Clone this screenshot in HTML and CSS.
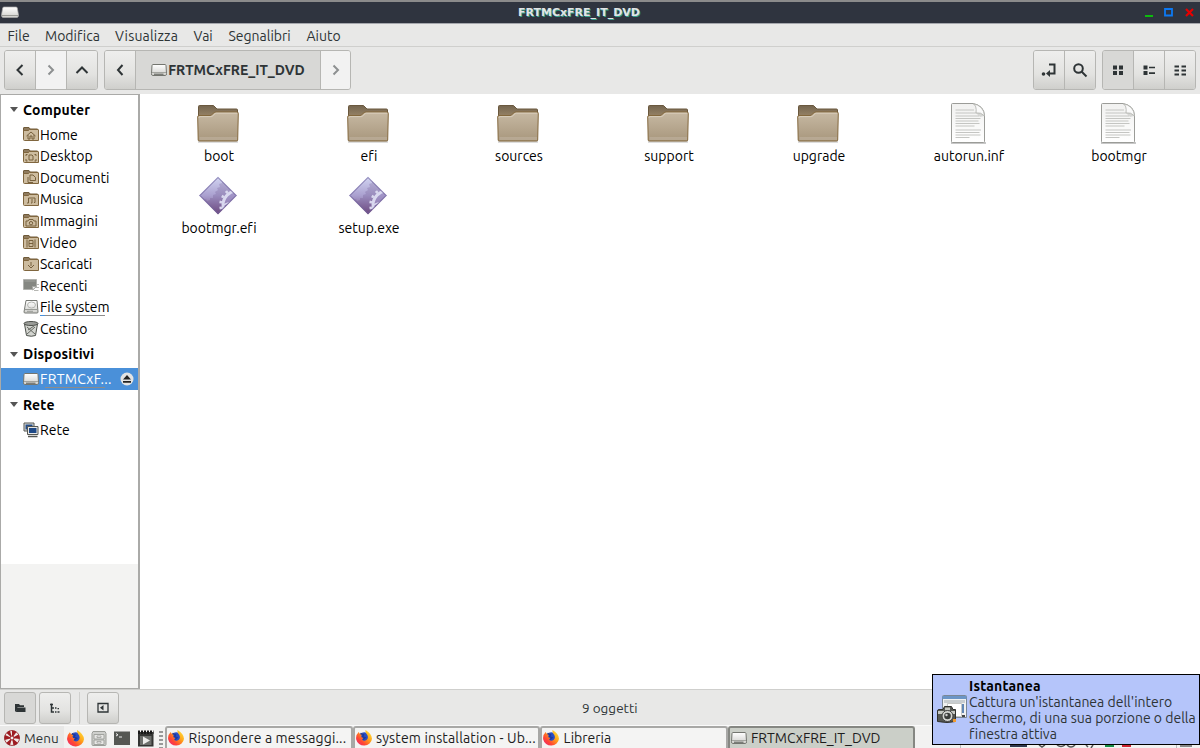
FILE: index.html
```html
<!DOCTYPE html>
<html lang="it">
<head>
  <meta charset="UTF-8">
  <title>FRTMCxFRE_IT_DVD</title>
  <link rel="stylesheet" href="styles.css">
</head>
<body>
  <!-- Icone condivise -->
  <svg class="defs" width="0" height="0">
    <defs>
      <linearGradient id="gFolder" x1="0" y1="0" x2="0" y2="1"><stop offset="0" stop-color="#c7b9a3"/><stop offset="1" stop-color="#a8977d"/></linearGradient>
      <linearGradient id="gBack" x1="0" y1="0" x2="0" y2="1"><stop offset="0" stop-color="#74654f"/><stop offset="1" stop-color="#968265"/></linearGradient>
      <linearGradient id="gExe" x1="0" y1="0" x2="0" y2="1"><stop offset="0" stop-color="#d3d6f3"/><stop offset=".5" stop-color="#aaa0cf"/><stop offset="1" stop-color="#70497f"/></linearGradient>
      <linearGradient id="gPage" x1="0" y1="0" x2="0" y2="1"><stop offset="0" stop-color="#f1f1f0"/><stop offset="1" stop-color="#fff"/></linearGradient>
      <linearGradient id="gDisk" x1="0" y1="0" x2="0" y2="1"><stop offset="0" stop-color="#fff"/><stop offset="1" stop-color="#cfcfcb"/></linearGradient>
      <linearGradient id="gFox" x1="1" y1="0" x2="0" y2="1"><stop offset="0" stop-color="#fff044"/><stop offset=".4" stop-color="#ffa319"/><stop offset=".7" stop-color="#ff4634"/><stop offset="1" stop-color="#e8207f"/></linearGradient>
      <clipPath id="cExe"><path d="M24 6L42 24.500 24 43 6 24.500z"/></clipPath>
    </defs>
    <symbol id="folder" viewBox="0 0 48 48">
      <path d="M4 43h40" stroke="#000" stroke-opacity=".18" stroke-width="1.500"/>
      <path d="M4.500 17V7.500q0-1 1-1H19.500l3.500 3.500H42.500q1 0 1 1V17z" fill="url(#gBack)" stroke="#6a583e"/>
      <path d="M3.700 18q0-1.500 1.300-1.500H16q1 0 1.800-.8l2.200-2q.8-.7 2-.7H43q1.300 0 1.300 1.300L43.700 41q0 1-1 1H5.200q-1 0-1-1z" fill="url(#gFolder)" stroke="#84683d"/>
      <path d="M4.900 18.800q0-1.200 1-1.200H17q1 0 1.500-.5l2.500-2.300q.6-.6 1.500-.6H43" fill="none" stroke="#e0d6c6" stroke-opacity=".75"/>
      <path d="M5.500 38h37.500v3H5.500z" fill="#cabfaf" opacity=".4"/>
    </symbol>
    <symbol id="page" viewBox="0 0 48 48">
      <path d="M7 44h35" stroke="#000" stroke-opacity=".22" stroke-width="2"/>
      <path d="M8.500 4.500H29q11 2 11.500 12V42.500q0 1-1 1H8.500q-1 0-1-1V5.500q0-1 1-1z" fill="url(#gPage)" stroke="#9b9c98"/>
      <path d="M11.500 11H30m-18.500 3H32m-20.500 3H35m-23.500 2.500h25m-25 2.500h23m-23 2.500h24m-24 2.500h19M11.500 31H37m-25.500 2.500h24m-24 2.500h25m-25 2.500h14" stroke="#c4c5c2" stroke-width="1"/>
      <path d="M29 4.500q4 2 3 9.500 5-1 8.500 3Q40 7 29 4.500z" fill="#fafafa" stroke="#adaea9" stroke-width=".8"/>
      <path d="M32 14q5-1 8 3l-4 1z" fill="#b8b9b6" opacity=".5"/>
    </symbol>
    <symbol id="exe" viewBox="0 0 48 48">
      <path d="M24 5.500L43 24.500 24 43.500 5 24.500z" fill="url(#gExe)"/>
      <g clip-path="url(#cExe)">
        <path d="M6 27l3 0 1 2 2-1 1 2 3-1 0-2 3 0 0-3 3-1-1-2 3-2-1-2 3-1-1-3 3-1 0-3 5 2 14 14L24 46 6 30z" fill="#5f437f" opacity=".22"/>
        <circle cx="43" cy="34" r="14" fill="#a79bd0" fill-opacity=".5" stroke="#d9d8ef" stroke-width="3"/>
        <circle cx="43" cy="34" r="16.500" fill="none" stroke="#d9d8ef" stroke-width="2.500" stroke-dasharray="2.600 3.300"/>
        <path d="M29 34l8-3" stroke="#d9d8ef" stroke-width="1.500"/>
      </g>
      <path d="M24 6.500L42 24.500 24 42.500 6 24.500z" fill="none" stroke="#71649c" stroke-width=".9"/>
    </symbol>
    <symbol id="sfolder" viewBox="0 0 16 16">
      <path d="M.5 5V2q0-.5.500-.5h5l1 1.500h7.500v2z" fill="#8f7b5e" stroke="#705b3a"/>
      <path d="M.5 5q0-.5.500-.5h4.500l1-1h8.500q.5 0 .5.500v10.500H1.500q-1 0-1-1z" fill="#cdbc9f" stroke="#80663e"/>
    </symbol>
    <symbol id="drive" viewBox="0 0 16 14">
      <path d="M2 1.500h12q.8 0 1 1l.5 8q0 2-1 2H1.500q-1 0-1-2l.5-8q.2-1 1-1z" fill="url(#gDisk)" stroke="#73756f"/>
      <path d="M1 9.500h14" stroke="#a3a49f"/><path d="M3 11.200h9.500" stroke="#555752"/>
    </symbol>
    <symbol id="firefox" viewBox="0 0 16 16">
      <circle cx="8.200" cy="8.200" r="6" fill="#284ec3"/>
      <path d="M9.500 0Q16 4 16 8.700A8 7.500 0 0 1 .2 9.500Q-.5 5 2.700 2l1 1.800 2.800-.6L5 6.500l3 1-2 2.200q2 1.800 4.500.4Q12.800 8 11.300 5 9 3 9.500 0z" fill="url(#gFox)"/>
      <path d="M4.500 3.500l3 1.300-1 2 2.500 1-2 1.700" fill="none" stroke="#1c3aa0" stroke-width="1.500"/>
    </symbol>
  </svg>

  <header class="titlebar">
    <svg class="titlebar-icon" width="18" height="13" viewBox="0 0 18 13"><path d="M3 1h12q1 0 1.300 1L17.500 9q0 2.500-1.500 2.500H2Q.5 11.500.5 9L1.700 2Q2 1 3 1z" fill="url(#gDisk)" stroke="#aaa" stroke-width=".7"/><path d="M1 9.500h16" stroke="#999a96"/></svg>
    <span class="titlebar-text">FRTMCxFRE_IT_DVD</span>
    <svg class="titlebar-buttons" width="56" height="20" viewBox="0 0 56 20"><path d="M1 12h8v2H1z" fill="#0cbb0c"/><path d="M21 6h7v6.500h-7z" fill="none" stroke="#0d79f2" stroke-width="1.800"/><path d="M42 6l7 7m0-7l-7 7" stroke="#e80000" stroke-width="2.200"/></svg>
  </header>

  <nav class="menubar">
    <span class="m1">File</span><span class="m2">Modifica</span><span class="m3">Visualizza</span><span class="m4">Vai</span><span class="m5">Segnalibri</span><span class="m6">Aiuto</span>
  </nav>

  <div class="toolbar">
    <div class="group">
      <button class="btn"><svg width="16" height="16"><path d="M10.500 3L5.500 8l5 5" class="line"/></svg></button>
      <button class="btn off"><svg width="16" height="16"><path d="M5.500 3.500L10 8l-4.500 4.500" class="line"/></svg></button>
      <button class="btn"><svg width="16" height="16"><path d="M2.500 11L8 5.500l5.500 5.500" class="line"/></svg></button>
    </div>
    <div class="group">
      <button class="btn"><svg width="16" height="16"><path d="M10.500 3L6 8l4.500 5" class="line"/></svg></button>
      <button class="btn pressed path"><svg width="16" height="14"><use href="#drive"/></svg><span>FRTMCxFRE_IT_DVD</span></button>
      <button class="btn off last"><svg width="16" height="16"><path d="M5.500 3.500L10 8l-4.500 4.500" class="line"/></svg></button>
    </div>
    <div class="group right">
      <button class="btn"><svg width="16" height="16"><path d="M8 2.500h5.500v9H8" class="line"/><path d="M5 11.500L9 8v7z" fill="#2e3436"/><circle cx="2.500" cy="12" r="1.800" fill="#2e3436"/></svg></button>
      <button class="btn"><svg width="16" height="16"><circle cx="6.500" cy="6.500" r="4.300" class="line"/><path d="M9.500 9.500l5 5" class="line"/></svg></button>
    </div>
    <div class="group">
      <button class="btn pressed"><svg width="16" height="16"><path d="M3 3.500h4v4H3zM9 3.500h4v4H9zM3 9h4v4H3zM9 9h4v4H9z" fill="#2e3436"/></svg></button>
      <button class="btn"><svg width="16" height="16"><path d="M2.500 3.500h4v4h-4zM8 4.700h6v1.600H8zM2.500 9h4v4h-4zM8 10.300h6v1.600H8z" fill="#2e3436"/></svg></button>
      <button class="btn"><svg width="16" height="16"><path d="M2.500 4.500h4.500m2.500 0H14M2.500 8.500h4.500m2.500 0H14M2.500 12.500h4.500m2.500 0H14" stroke="#2e3436" stroke-width="2"/></svg></button>
    </div>
  </div>

  <div class="content">
    <aside class="sidebar">
      <div class="places">
        <h3 class="first">Computer</h3>
        <ul>
          <li><svg width="16" height="16"><use href="#sfolder"/><path d="M3.500 10L8 6l4.500 4M5 9v4h2v-3h2v3h2V9" class="emblem"/></svg><span>Home</span></li>
          <li><svg width="16" height="16"><use href="#sfolder"/><path d="M3 8V6.500h1.500m7 0H13V8M3 11v2h1.500m7 0H13v-2M6 7h3l1 1v4H6z" class="emblem"/></svg><span>Desktop</span></li>
          <li><svg width="16" height="16"><use href="#sfolder"/><path d="M7 6h3l2.500 2.500v3H7zM5 8v5.500h5" class="emblem"/></svg><span>Documenti</span></li>
          <li><svg width="16" height="16"><use href="#sfolder"/><path d="M5.500 12V7h6.500v4.500M4 12h1.500M9 12V8m-1 4h1m2-.5h1" class="emblem"/></svg><span>Musica</span></li>
          <li><svg width="16" height="16"><use href="#sfolder"/><path d="M3 8h2l1-1.500h4L11 8h2v5H3z" class="emblem"/><circle cx="8" cy="10.200" r="1.700" class="emblem"/></svg><span>Immagini</span></li>
          <li><svg width="16" height="16"><use href="#sfolder"/><path d="M4 5.500v8m8-8v8M6 6.500h4v6H6zM6 9.500h4" class="emblem"/></svg><span>Video</span></li>
          <li><svg width="16" height="16"><use href="#sfolder"/><path d="M8 6v4M5 9l3 3 3-3" class="emblem"/></svg><span>Scaricati</span></li>
          <li><svg width="16" height="16"><path d="M.5 2.500h13v7l-3 3H.5z" fill="#858782" stroke="#b0b1ad"/><path d="M1.500 4h11" stroke="#a1a39e"/><path d="M9.500 13v-3.500h4z" fill="#eee" stroke="#a6a7a3"/><path d="M14 7.500h2M13 10.500h3M11 13.500h4.500" stroke="#b6b7b3"/></svg><span>Recenti</span></li>
          <li><svg width="16" height="16"><path d="M3 1.500h11l1 11.500q0 1-1 1H2q-1 0-1-1z" fill="url(#gDisk)" stroke="#777974"/><ellipse cx="8.500" cy="6" rx="4" ry="3" fill="none" stroke="#b3b5b1"/><path d="M1.500 10.500h13M4 12.300h6" stroke="#999b96"/></svg><span class="usage">File system</span></li>
          <li><svg width="16" height="16"><path d="M1.500 3l2 11.500q5 1.500 9 0L14.500 3z" fill="#d3d5d0" stroke="#4d504b"/><ellipse cx="8" cy="2.500" rx="7" ry="2" fill="#9b9d99" stroke="#4d504b"/><path d="M4 6l8 7m-8 0l8-7M5 9l6-4" stroke="#666963"/></svg><span>Cestino</span></li>
        </ul>
        <h3>Dispositivi</h3>
        <ul>
          <li class="selected"><svg width="16" height="14"><use href="#drive"/></svg><span class="usage">FRTMCxF...</span><svg class="eject" width="14" height="14"><circle cx="7" cy="7" r="6.500" fill="#e4e4e3"/><path d="M7 3l4 4.500H3zM3 9h8v1.700H3z" fill="#222"/></svg></li>
        </ul>
        <h3>Rete</h3>
        <ul>
          <li><svg width="16" height="16"><path d="M1 1h10v8H1z" fill="#dcddda" stroke="#555753"/><path d="M2.500 2.500h7v5h-7z" fill="#234c89"/><path d="M4.500 4.500h10.500v8H4.500z" fill="#e8e8e6" stroke="#555753"/><path d="M6 6h7.500v5H6z" fill="#204a87"/><path d="M5 14.500h9.500" stroke="#555753" stroke-width="1.500"/></svg><span>Rete</span></li>
        </ul>
      </div>
    </aside>

    <main class="files">
      <div class="file"><svg width="48" height="48"><use href="#folder"/></svg><span>boot</span></div>
      <div class="file"><svg width="48" height="48"><use href="#folder"/></svg><span>efi</span></div>
      <div class="file"><svg width="48" height="48"><use href="#folder"/></svg><span>sources</span></div>
      <div class="file"><svg width="48" height="48"><use href="#folder"/></svg><span>support</span></div>
      <div class="file"><svg width="48" height="48"><use href="#folder"/></svg><span>upgrade</span></div>
      <div class="file"><svg width="48" height="48"><use href="#page"/></svg><span>autorun.inf</span></div>
      <div class="file"><svg width="48" height="48"><use href="#page"/></svg><span>bootmgr</span></div>
      <div class="file"><svg width="48" height="48"><use href="#exe"/></svg><span>bootmgr.efi</span></div>
      <div class="file"><svg width="48" height="48"><use href="#exe"/></svg><span>setup.exe</span></div>
    </main>
  </div>

  <footer class="statusbar">
    <button class="btn small pressed"><svg width="16" height="16"><path d="M3 4h4l1 1.300h4V7H5.500L4.500 11.500H3z" fill="#2e3436"/><path d="M5 7.500h8.500v4.500H4z" fill="#2e3436"/></svg></button>
    <button class="btn small"><svg width="16" height="16"><path d="M4.500 3.500V12H7M3 4.500h3M4.500 8H7" fill="none" stroke="#2e3436" stroke-width="1.500"/><path d="M8 7.300h1.500v1.500H8zM8 11.200h1.500v1.500H8zM10.500 8h1.500v1.300h-1.500zM10.500 11.200h2v1.500h-2z" fill="#2e3436"/></svg></button>
    <i class="separator"></i>
    <button class="btn small"><svg width="16" height="16"><path d="M3 3.500h10v8.500H3z" fill="none" stroke="#2e3436" stroke-width="1.300"/><path d="M8.500 5v5.500L5 7.800z" fill="#2e3436"/></svg></button>
    <span class="status-text">9 oggetti</span>
  </footer>

  <div class="taskbar">
    <div class="menu-button"><svg width="16" height="16"><circle cx="8" cy="8" r="7.500" fill="#f1e9e7" stroke="#8f1f23" stroke-width=".8"/><path d="M8 8L8 .5Q11 .5 12.500 2zM8 8l6.500-3.500Q16 7 15.500 9zM8 8l6 5q-2 2.500-4.500 2.500zM8 8l-2 7.300Q4 15 2.200 13zM8 8L.6 10Q0 7 1 5zM8 8L2.500 3Q4 1.200 6 .8z" fill="#9d1c22"/><circle cx="8" cy="8" r="2" fill="#eee" stroke="#9d1c22"/></svg><span>Menu</span></div>
    <div class="launchers">
      <svg width="17" height="17" viewBox="0 0 16 16"><use href="#firefox"/></svg>
      <svg width="16" height="17"><path d="M2 1.500h12l1 2v11q0 1-1 1H2q-1 0-1-1v-11z" fill="#cfd0cd" stroke="#9b9d98"/><path d="M3 4.500h10v4.500H3zM3 10h10v4.500H3z" fill="#e7e7e5" stroke="#a1a39e"/><path d="M6 6h4v1.500H6zM6 11.500h4V13H6z" fill="#fff" stroke="#92948f" stroke-width=".7"/></svg>
      <svg width="16" height="16"><path d="M0 1.500h16v13.500H0z" fill="#555753"/><path d="M2 3.500l2 1.300L2 6M5 7h3" fill="none" stroke="#eee"/></svg>
      <svg width="17" height="17"><path d="M1 2h15.500v14.500H1z" fill="#333432"/><path d="M1 2.300h15.500" stroke="#181818" stroke-width="3.500" stroke-dasharray="2 1"/><path d="M3 6h11.500v9H3z" fill="#6d6f6c"/><path d="M6 6.500v8l7-4z" fill="#ececea"/></svg>
    </div>
    <i class="grip"></i>
    <div class="tasks">
      <div class="task"><svg width="16" height="16"><use href="#firefox"/></svg><span class="t1">Rispondere a messaggi...</span></div>
      <div class="task"><svg width="16" height="16"><use href="#firefox"/></svg><span class="t2">system installation - Ub...</span></div>
      <div class="task"><svg width="16" height="16"><use href="#firefox"/></svg><span class="t3">Libreria</span></div>
      <div class="task active"><svg width="16" height="14"><use href="#drive"/></svg><span class="t4">FRTMCxFRE_IT_DVD</span></div>
    </div>
    <svg class="tray" width="240" height="4"><path d="M50 0h17v2H50z" fill="#31394f"/><path d="M79 0l3 2 3-2M97 0q4 3 8 0M107 0q4 4 8 0M126 0l2 2M133 0l-2 3" fill="none" stroke="#555" stroke-width="1.500"/><path d="M145 0h9v2h-9z" fill="#168c45"/><path d="M154 0h8v2h-8z" fill="#eee"/><path d="M162 0h9v2h-9z" fill="#cc2331"/><path d="M220 0h12v2h-12z" fill="#888"/><path d="M.5 0v4M216.500 0v4" stroke="#bbb"/></svg>
  </div>

  <!-- Notifica sopra la barra -->
  <div class="tooltip">
    <svg width="32" height="32"><path d="M6.500 2.500q0-1 1-1h22q1 0 1 1v21h-24z" fill="#f0f1f1" stroke="#7b8795"/><path d="M6.500 2h24v3h-24z" fill="#6b95c6"/><path d="M8 6h21v3H8z" fill="#c8cdd0"/><path d="M11.500 9.500h14v13h-14z" fill="#fff" stroke="#c6c8c6"/><path d="M27 10v9" stroke="#6287b5" stroke-width="2"/><path d="M26 21h3v2h-3z" fill="#444"/><path d="M3 15.500h4l1.500-3h7l1.500 3h2.500v12q-8 2-18 0V17q0-1.500 1.500-1.500z" fill="#555752" stroke="#30312e"/><path d="M2 17h17v3H2zM9 13.500h5v3H9z" fill="#c6c8c3"/><circle cx="11.500" cy="22" r="5.500" fill="#d4d5d1" stroke="#444"/><circle cx="11.500" cy="22" r="3.300" fill="#3a3c3a"/><circle cx="10.500" cy="21" r="1.200" fill="#ccc"/><path d="M17 25h3v3h-3z" fill="#f29a2d"/></svg>
    <div class="tooltip-text">
      <b>Istantanea</b>
      <span>Cattura un'istantanea dell'intero</span>
      <span>schermo, di una sua porzione o della</span>
      <span>finestra attiva</span>
    </div>
  </div>
</body>
</html>
```
FILE: styles.css
```css
/* Colori */
:root {
  --bg: #e8e8e7;
  --border: #b6b6b3;
  --text: #2e3436;
  --selected: #4a90d9;
}
/* Generali */
* {
  box-sizing: border-box;
}
body {
  margin: 0;
  width: 1200px;
  height: 748px;
  overflow: hidden;
  position: relative;
  display: flex;
  flex-direction: column;
  background: var(--bg);
  color: var(--text);
  font-family: Ubuntu, "Noto Sans", sans-serif;
  font-size: 14px;
  font-variant-ligatures: none;
  white-space: nowrap;
}
svg {
  flex: none;
}
.defs {
  position: absolute;
}
/* Barra del titolo */
.titlebar {
  height: 24px;
  flex: none;
  display: flex;
  align-items: center;
  border-top: 2px solid #8b8b8b;
  border-bottom: 1px solid #a5a7ad;
  background: #2f343f;
}
.titlebar-icon {
  margin-left: 1px;
}
.titlebar-text {
  margin-left: 499px;
  color: #e2e4e6;
  font-family: "DejaVu Sans", sans-serif;
  font-size: 11px;
  font-weight: bold;
  text-shadow: 1px 1px 0 #35a08c;
}
.titlebar-buttons {
  margin-left: auto;
}
/* Menu */
.menubar {
  height: 23px;
  flex: none;
  display: flex;
  align-items: center;
  padding: 2px 0 0 7.5px;
  border-bottom: 1px solid #cfcfcd;
}
.m1 { width: 37.5px; }
.m2 { width: 70px; }
.m3 { width: 78.5px; letter-spacing: 0.2px; }
.m4 { width: 35px; }
.m5 { width: 78px; }
/* Barra degli strumenti */
.toolbar {
  height: 47px;
  flex: none;
  display: flex;
  gap: 6px;
  padding: 3px 4px 4px 4px;
}
.group {
  display: flex;
  border: 1px solid var(--border);
  border-radius: 3px;
  overflow: hidden;
}
.right {
  margin-left: auto;
}
.btn {
  width: 31px;
  padding: 0;
  display: flex;
  align-items: center;
  justify-content: center;
  border: 0;
  border-left: 1px solid var(--border);
  background: linear-gradient(#eeeeed, #e3e3e1 60%, #cfcfcc);
  color: var(--text);
  font: inherit;
}
.btn:first-child {
  width: 30px;
  border-left: 0;
}
.btn.off {
  background: #f2f2f2;
}
.btn.off .line {
  stroke: #8d9091;
}
.btn.pressed {
  background: #d8d8d6;
}
.btn.last {
  width: 30px;
}
.btn.path {
  width: 185px;
  gap: 1px;
  font-weight: bold;
}
.line {
  fill: none;
  stroke: #2e3436;
  stroke-width: 2;
}
/* Pannello laterale */
.content {
  flex: 1;
  display: flex;
  min-height: 0;
  background: #fff;
  border-bottom: 1px solid #cfcfcd;
}
.sidebar {
  width: 140px;
  border: 1px solid #aaaaa8;
  border-right-width: 2px;
  background: #f3f3f2;
}
.places {
  height: 469px;
  background: #fff;
  color: #000;
}
.places h3 {
  height: 29px;
  margin: 0;
  padding: 1px 0 0 9px;
  display: flex;
  align-items: center;
  gap: 5px;
  font-size: 14px;
  letter-spacing: 0.2px;
}
.places h3.first {
  height: 28.4px;
}
.places h3::before {
  content: "";
  border: 4.5px solid transparent;
  border-top: 5px solid #555;
  border-bottom: 0;
}
.places ul {
  margin: 0;
  padding: 0;
  list-style: none;
}
.places li {
  height: 21.6px;
  display: flex;
  align-items: center;
  padding-left: 22px;
  gap: 1px;
}
.places li span {
  padding-top: 1px;
}
.places li.selected {
  background: var(--selected);
  color: #fff;
}
.places li.selected span {
  letter-spacing: 0.3px;
}
/* Spazio occupato sul disco */
.usage {
  line-height: 17px;
  background: linear-gradient(90deg, var(--selected) 5px, #8c8c8c 5px) 0 100% / 65px 1px no-repeat;
}
.eject {
  margin-left: auto;
  margin-right: 4px;
}
.emblem {
  fill: none;
  stroke: #77603d;
  stroke-width: 1;
}
/* File */
.files {
  flex: 1;
  display: grid;
  grid-template-columns: repeat(7, 150px);
  grid-auto-rows: 72px;
  align-content: start;
  padding: 5px 0 0 4px;
  color: #000;
}
.file {
  display: flex;
  flex-direction: column;
  align-items: center;
}
.file svg {
  margin-right: 2px;
}
.file span {
  line-height: 18px;
}
/* Barra di stato */
.statusbar {
  height: 35px;
  flex: none;
  display: flex;
  align-items: center;
  gap: 3px;
  padding-left: 4px;
}
.btn.small {
  width: 32px;
  height: 32px;
  border: 1px solid var(--border);
  border-radius: 3px;
}
.separator {
  height: 32px;
  margin: 0 4px 0 5px;
  border-left: 1px solid #cfcfcd;
}
.status-text {
  margin-left: 460px;
  font-size: 13.5px;
}
/* Barra delle applicazioni */
.taskbar {
  height: 23px;
  flex: none;
  display: flex;
  position: relative;
  border-top: 1px solid #fafafa;
  background: #f2f2f1;
}
.menu-button {
  width: 64px;
  display: flex;
  align-items: center;
  gap: 4px;
  padding: 2px 0 0 4px;
  background: #e8e8e7;
  font-size: 13.5px;
}
.launchers {
  display: flex;
  align-items: center;
  gap: 7px;
  padding: 2px 0 0 3px;
}
.grip {
  width: 4px;
  margin: 4px 2px 0 5px;
  background: radial-gradient(circle, #999 0.8px, transparent 1px) 0 0 / 2px 4px;
}
.tasks {
  display: flex;
}
.task {
  width: 187.5px;
  display: flex;
  align-items: center;
  gap: 4.5px;
  padding-left: 1px;
  border: 2px solid #a8a8a6;
  border-bottom: 0;
  border-radius: 3px 3px 0 0;
  background: #f4f4f3;
  color: #1d1d1d;
}
.task.active {
  border-color: #858782;
  background: #cbcfc8;
}
.t1,
.t2 {
  letter-spacing: 0.15px;
}
.tray {
  position: absolute;
  left: 960px;
  top: 19px;
}
/* Notifica */
.tooltip {
  position: absolute;
  left: 932px;
  top: 674px;
  width: 268px;
  height: 71px;
  display: flex;
  align-items: center;
  gap: 1px;
  padding-left: 3px;
  border: 1px solid #000;
  background: #b5c5fa;
}
.tooltip-text {
  display: flex;
  flex-direction: column;
  line-height: 16px;
}
.tooltip-text b {
  color: #000;
  letter-spacing: 0.2px;
}
```
